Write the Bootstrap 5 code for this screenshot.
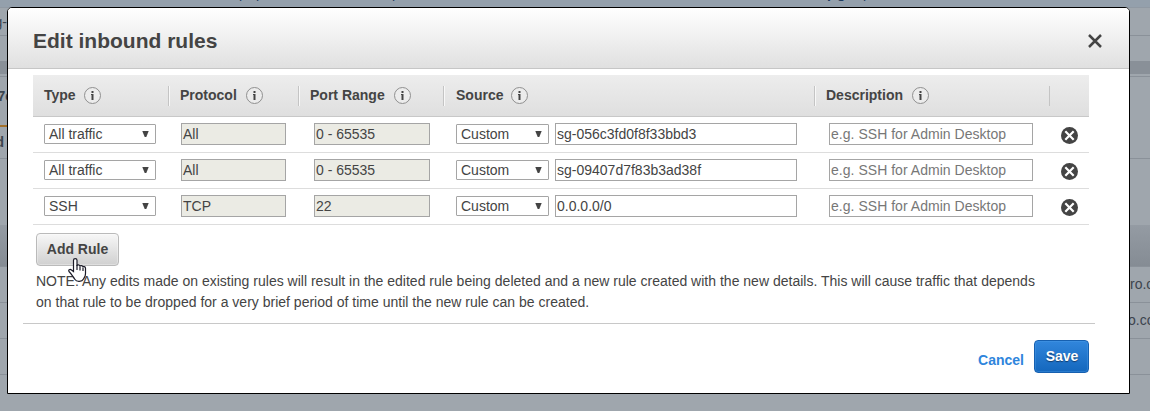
<!DOCTYPE html>
<html lang="en">
<head>
<meta charset="utf-8">
<title>Edit inbound rules</title>
<link href="https://cdn.jsdelivr.net/npm/bootstrap@5.3.0/dist/css/bootstrap.min.css" rel="stylesheet">
<style>
body{font-family:"Liberation Sans",Arial,sans-serif;font-size:14px;line-height:21px;color:#444;background:#9fa6ad;width:1150px;height:411px}
.strip{border-bottom:1px solid #8a9199;color:#3c444d;white-space:nowrap;flex:none}
.strip-top{height:8px;background:#94a0ac;color:#1e3a5c;border-color:#9099a3;overflow:hidden;padding-left:239px}
.strip-top span{margin-top:-17px}
.edge-l{width:7px;display:flex;justify-content:flex-end}
.edge-r{width:20px;overflow:hidden}
.band{height:13px;background:#899098;flex:none}
.tab-line{height:2px;width:7px;background:#a3712b}
.dialog{left:7px;top:7px;width:1123px;height:387px;border:1px solid #000;border-radius:5px 5px 0 0;background:#fff;overflow:hidden}
.dialog-head{height:61px;border-bottom:1px solid #c6c6c6;background:linear-gradient(#fff,#e0e0e0);padding:5px 27px 0 25px}
.dialog-head h1{font-size:21px;line-height:26px;letter-spacing:0;color:#444}
.rules{margin:6px 40px 0 25px}
.rule-row{display:grid;grid-template-columns:135px 130px 145px 371px 235px 40px;height:36px;border-bottom:1px solid #ddd}
.rule-head{height:42px;border-bottom:1px solid #c8c8c8;background:linear-gradient(#ededed,#dfdfdf);font-weight:700;align-items:center}
.head-cell{height:20px;display:flex;align-items:center;gap:9px;padding-left:11px;border-left:1px solid #c4c4c4;box-shadow:inset 1px 0 #f8f8f8}
.head-cell:first-child{border:0;box-shadow:none;gap:8px}
.head-cell:nth-child(4){padding-left:12px;gap:8px}
.head-cell:last-child{box-shadow:none}
.head-cell svg{flex:none}
.cell{padding-top:6px;display:flex}
.field{border:1px solid #a5a5a5;height:22px;line-height:20px;padding:0 1px;background:#fff;border-radius:0;color:#444}
.field.off{background:#ebebe4}
.field.hint{color:#777;letter-spacing:.03px}
.pick{border:1px solid #a5a5a5;border-radius:1px;height:20px;margin-top:1px;line-height:18px;padding:0 6px 0 4px;background:#fff;display:flex;align-items:center;justify-content:space-between}
.btn-add{width:83px;height:33px;margin:8px 0 0 4px;border:1px solid #bababa;border-radius:4px;padding:0;font-size:14px;font-weight:700;color:#444;background:linear-gradient(#f7f7f7,#d0d0d0);box-shadow:inset 0 0 0 1px rgba(255,255,255,.3)}
.note{margin:5px 0 0 28px;letter-spacing:.006px}
.foot{margin:10px 34px 0 15px;border-top:1px solid #c8c8c8;padding:16px 6px 0 0}
.btn-save{width:55px;height:33px;border:1px solid #1660b0;border-radius:4px;padding:0 0 0 1px;font-size:14px;font-weight:700;color:#fff;text-shadow:0 1px 1px #123c6c;background:linear-gradient(#3186dc,#1467bd);box-shadow:inset 0 0 0 1px rgba(80,160,235,.35)}
.cancel{color:#2e85dc;font-weight:700;margin:10px 10px 0 0}
.pointer{left:66px;top:257px}
</style>
</head>
<body class="position-relative overflow-hidden">
<svg width="0" height="0" class="position-absolute">
<symbol id="info" viewBox="0 0 17 17"><circle cx="8.5" cy="8.5" r="8" fill="#ececec" stroke="#8f8f8f"/><path d="M7.500 4h2v2h-2zM7 7h2.500v6h-2V8H7z" fill="#444"/></symbol>
<symbol id="remove" viewBox="0 0 17 17"><circle cx="8.5" cy="8.5" r="8.5" fill="#444"/><path d="M4.300 4.300l8.400 8.400M12.700 4.300l-8.400 8.400" stroke="#fff" stroke-width="2.2"/></symbol>
<symbol id="caret" viewBox="0 0 7 6"><path d="M.3 0h6.400L4.300 6H2.700z" fill="#444"/></symbol>
</svg>

<div class="d-flex flex-column h-100 overflow-hidden">
  <div class="strip strip-top d-flex">
    <span style="width:17px">p</span><span style="width:136px">p</span><span style="width:435px">p</span><span class="fw-bold" style="width:10px">p</span><span class="fw-bold" style="width:26px">g</span><span>p</span>
  </div>
  <div class="strip d-flex justify-content-between" style="height:28px"><span class="edge-l pt-1">g-</span></div>
  <div style="height:25px" class="flex-shrink-0"></div>
  <div class="band"></div>
  <div class="strip" style="height:3px"></div>
  <div class="strip d-flex flex-column" style="height:82px">
    <span class="edge-l fw-bold" style="height:48px;padding-top:9px;width:13px">7c</span>
    <div class="tab-line"></div>
    <span class="edge-l fw-bold" style="padding-top:5px;padding-right:3px">d</span>
  </div>
  <div style="height:66px" class="flex-shrink-0"></div>
  <div class="strip" style="height:42px;background:linear-gradient(#949ba3,#858c94)"></div>
  <div class="strip d-flex justify-content-end" style="height:36px"><span class="edge-r" style="padding-top:7px">ro.c</span></div>
  <div class="strip d-flex justify-content-end" style="height:36px"><span class="edge-r" style="padding-top:7px;margin-right:2px;width:20px;overflow:visible">o.co</span></div>
  <div class="strip" style="height:36px"></div>
</div>

<div class="dialog position-absolute">
  <div class="dialog-head d-flex align-items-center justify-content-between">
    <h1 class="fw-bold m-0">Edit inbound rules</h1>
    <svg width="14" height="14" viewBox="0 0 14 14" style="margin-top:1px"><path d="M1 1l12 12M13 1L1 13" stroke="#444" stroke-width="2.500"/></svg>
  </div>
  <div class="rules">
    <div class="rule-row rule-head">
      <div class="head-cell">Type<svg width="17" height="17"><use href="#info"/></svg></div>
      <div class="head-cell">Protocol<svg width="17" height="17"><use href="#info"/></svg></div>
      <div class="head-cell">Port Range<svg width="17" height="17"><use href="#info"/></svg></div>
      <div class="head-cell">Source<svg width="17" height="17"><use href="#info"/></svg></div>
      <div class="head-cell">Description<svg width="17" height="17"><use href="#info"/></svg></div>
      <div class="head-cell"></div>
    </div>
    <div id="rows"></div>
  </div>
  <div class="ms-4 ps-0"><button class="btn btn-add" type="button">Add Rule</button></div>
  <p class="note mb-0">NOTE: Any edits made on existing rules will result in the edited rule being deleted and a new rule created with the new details. This will cause traffic that depends<br>on that rule to be dropped for a very brief period of time until the new rule can be created.</p>
  <div class="foot d-flex justify-content-end align-items-start">
    <span class="cancel">Cancel</span>
    <button class="btn btn-save" type="button">Save</button>
  </div>
</div>

<svg class="pointer position-absolute" width="21" height="26" viewBox="0 0 21 26"><path d="M7.500 14.500V3.200C7.500 1 11 1 11 3.200V9C11 7.300 14 7.500 14 9.500 14 8 17 8.300 17 10.200 17.200 9 19.500 9.300 19.500 11.300V16.500C19.500 19.500 18.500 20 17.500 22 16 25 10.500 25 9 22.500 7 20 6 17.500 3.200 14.800 1.700 13 4 11.500 5.500 13z" fill="#fff" stroke="#1b1b28" stroke-width="1.200"/><path d="M11 8v5M14 9.500v4M17 10.500v3.500" stroke="#1b1b28" stroke-width="1.200"/></svg>

<script src="https://cdn.jsdelivr.net/npm/bootstrap@5.3.0/dist/js/bootstrap.bundle.min.js"></script>
<script>
const rules=[['All traffic','All','0 - 65535','sg-056c3fd0f8f33bbd3'],['All traffic','All','0 - 65535','sg-09407d7f83b3ad38f'],['SSH','TCP','22','0.0.0.0/0']];
const pick=(t,w)=>`<div class="pick" style="width:${w}px">${t}<svg width="7" height="6"><use href="#caret"/></svg></div>`;
const field=(t,w,c='')=>`<div class="field ${c}" style="width:${w}px">${t}</div>`;
document.getElementById('rows').innerHTML=rules.map(([type,proto,port,src])=>`<div class="rule-row">
<div class="cell" style="padding-left:11px">${pick(type,112)}</div>
<div class="cell" style="padding-left:13px">${field(proto,105,'off')}</div>
<div class="cell" style="padding-left:16px">${field(port,116,'off')}</div>
<div class="cell" style="padding-left:13px;gap:6px">${pick('Custom',93)}${field(src,242)}</div>
<div class="cell" style="padding-left:15px">${field('e.g. SSH for Admin Desktop',204,'hint')}</div>
<div class="cell" style="padding:10px 0 0 12px"><svg width="17" height="17"><use href="#remove"/></svg></div></div>`).join('');
</script>
</body>
</html>
